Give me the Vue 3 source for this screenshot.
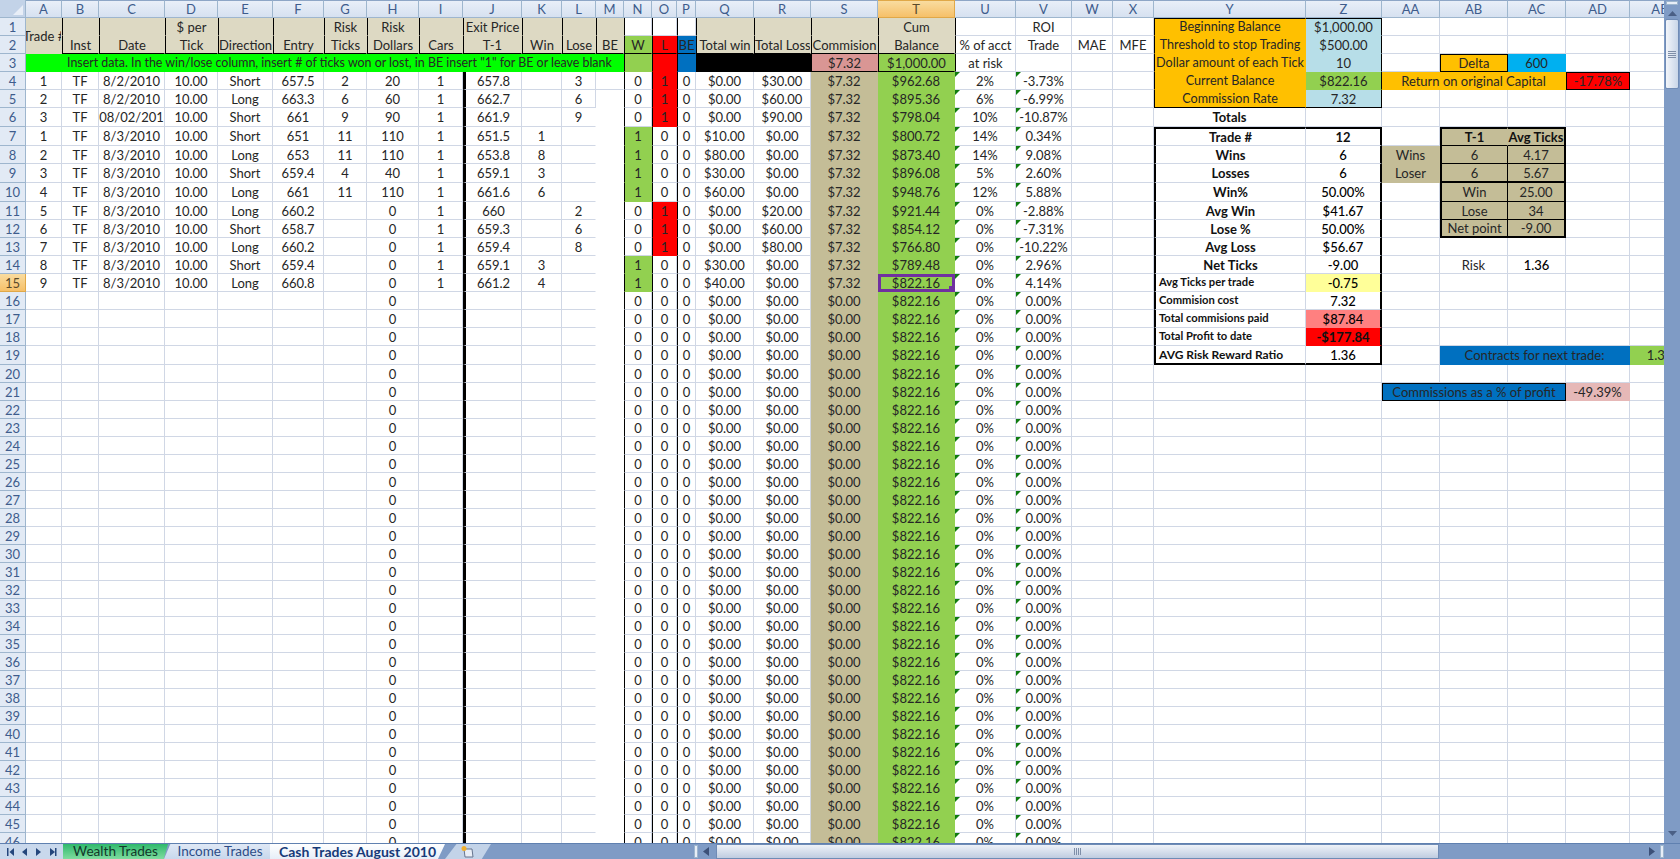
<template>
  <div class="excel">
    <div class="body">
      <div class="sheet">
        <table>
          <colgroup>
            <col :style="{ width: '26px' }" />
            <col v-for="c in columns" :key="c.name" :style="{ width: c.width + 'px' }" />
          </colgroup>
          <thead>
            <tr class="r-18">
              <th class="corner"><span class="corner-mark"></span></th>
              <th v-for="c in columns" :key="c.name" class="col-head" :class="{ picked: c.name === 'T' }">{{ c.name }}</th>
            </tr>
          </thead>
          <tbody>
            <tr v-for="row in rows" :key="row.n" :class="row.height">
              <th class="row-head" :class="{ picked: row.n === 15 }">{{ row.n }}</th>
              <td
                v-for="cell in row.cells"
                :key="cell.col"
                :class="cell.cls"
                :colspan="cell.colspan"
                :rowspan="cell.rowspan"
              >{{ cell.text }}</td>
            </tr>
          </tbody>
        </table>
      </div>
      <div class="vbar">
        <div class="split-v"></div>
        <svg class="arrow-up" width="11" height="7" viewBox="0 0 11 7"><path d="M5.5 1 L10 6 H1 Z" fill="#4a5f85" /></svg>
        <div class="thumb-v">
          <span></span><span></span><span></span><span></span>
        </div>
        <div class="vbar-space"></div>
        <svg class="arrow-down" width="11" height="7" viewBox="0 0 11 7"><path d="M1 1 H10 L5.5 6 Z" fill="#4a5f85" /></svg>
      </div>
    </div>
    <div class="bottom">
      <div class="nav">
        <svg width="62" height="16" viewBox="0 0 62 16">
          <g fill="#25467c">
            <rect x="7" y="4" width="1.5" height="8" />
            <path d="M14 4 V12 L9.5 8 Z" />
            <path d="M27 4 V12 L22 8 Z" />
            <path d="M36 4 V12 L41 8 Z" />
            <path d="M50 4 V12 L55 8 Z" />
            <rect x="55" y="4" width="1.5" height="8" />
          </g>
        </svg>
      </div>
      <div class="tab tab-wealth">Wealth Trades</div>
      <div class="tab tab-income">Income Trades</div>
      <div class="tab tab-cash">Cash Trades August 2010</div>
      <div class="tab tab-new">
        <svg width="16" height="14" viewBox="0 0 16 14">
          <path d="M4 4 H12 L13 12 H5 Z" fill="#e9eef6" stroke="#66758f" />
          <circle cx="4" cy="3.5" r="2.5" fill="#f0b02e" />
        </svg>
      </div>
      <div class="bottom-gap"></div>
      <div class="split-h"></div>
      <svg class="arrow-left" width="8" height="11" viewBox="0 0 8 11"><path d="M7 1 V10 L1 5.5 Z" fill="#3c5078" /></svg>
      <div class="thumb-h"><span></span><span></span><span></span><span></span></div>
      <div class="hbar-space"></div>
      <svg class="arrow-right" width="8" height="11" viewBox="0 0 8 11"><path d="M1 1 V10 L7 5.5 Z" fill="#3c5078" /></svg>
      <div class="split-end"></div>
    </div>
  </div>
</template>

<script setup>
const names = ['A', 'B', 'C', 'D', 'E', 'F', 'G', 'H', 'I', 'J', 'K', 'L', 'M', 'N', 'O', 'P', 'Q', 'R', 'S', 'T', 'U', 'V', 'W', 'X', 'Y', 'Z', 'AA', 'AB', 'AC', 'AD', 'AE']
const widths = [36, 37, 66, 53, 55, 51, 43, 52, 44, 59, 40, 34, 28, 28, 25, 19, 58, 57, 67, 77, 61, 56, 41, 41, 152, 76, 58, 68, 58, 64, 60]
const columns = names.map((name, i) => ({ name, width: widths[i] }))

// date, dollars, direction, entry, risk ticks, risk $, exit, win, lose, w, l, total win, total loss, balance, % risk, roi
const trades = [
  [1, '8/2/2010', 'Short', '657.5', 2, 20, '657.8', '', 3, 0, 1, '$0.00', '$30.00', '$962.68', '2%', '-3.73%'],
  [2, '8/2/2010', 'Long', '663.3', 6, 60, '662.7', '', 6, 0, 1, '$0.00', '$60.00', '$895.36', '6%', '-6.99%'],
  [3, '08/02/201', 'Short', '661', 9, 90, '661.9', '', 9, 0, 1, '$0.00', '$90.00', '$798.04', '10%', '-10.87%'],
  [1, '8/3/2010', 'Short', '651', 11, 110, '651.5', 1, '', 1, 0, '$10.00', '$0.00', '$800.72', '14%', '0.34%'],
  [2, '8/3/2010', 'Long', '653', 11, 110, '653.8', 8, '', 1, 0, '$80.00', '$0.00', '$873.40', '14%', '9.08%'],
  [3, '8/3/2010', 'Short', '659.4', 4, 40, '659.1', 3, '', 1, 0, '$30.00', '$0.00', '$896.08', '5%', '2.60%'],
  [4, '8/3/2010', 'Long', '661', 11, 110, '661.6', 6, '', 1, 0, '$60.00', '$0.00', '$948.76', '12%', '5.88%'],
  [5, '8/3/2010', 'Long', '660.2', '', 0, '660', '', 2, 0, 1, '$0.00', '$20.00', '$921.44', '0%', '-2.88%'],
  [6, '8/3/2010', 'Short', '658.7', '', 0, '659.3', '', 6, 0, 1, '$0.00', '$60.00', '$854.12', '0%', '-7.31%'],
  [7, '8/3/2010', 'Long', '660.2', '', 0, '659.4', '', 8, 0, 1, '$0.00', '$80.00', '$766.80', '0%', '-10.22%'],
  [8, '8/3/2010', 'Short', '659.4', '', 0, '659.1', 3, '', 1, 0, '$30.00', '$0.00', '$789.48', '0%', '2.96%'],
  [9, '8/3/2010', 'Long', '660.8', '', 0, '661.2', 4, '', 1, 0, '$40.00', '$0.00', '$822.16', '0%', '4.14%']
]

// everything right of column X, by row
const side = {
  1: { Y: ['Beginning Balance', 'orange box-top box-l fit'], Z: ['$1,000.00', 'sky box-top box-r'] },
  2: { Y: ['Threshold to stop Trading', 'orange box-l fit'], Z: ['$500.00', 'sky box-r'] },
  3: {
    Y: ['Dollar amount of each Tick', 'orange box-l fit'], Z: ['10', 'sky box-r'],
    AB: ['Delta', 'orange boxed'], AC: ['600', 'cyan']
  },
  4: {
    Y: ['Current Balance', 'orange box-l fit'], Z: ['$822.16', 'green box-r'],
    AA: ['Return on original Capital', 'orange', 3], AD: ['-17.78%', 'red boxed']
  },
  5: { Y: ['Commission Rate', 'orange box-l box-bot fit'], Z: ['7.32', 'sky box-r box-bot'] },
  6: { Y: ['Totals', 'bold'] },
  7: {
    Y: ['Trade #', 'bold thick-top thick-left'], Z: ['12', 'bold thick-top thick-right'],
    AB: ['T-1', 'bold tan thick-top thick-left line-b'], AC: ['Avg Ticks', 'bold tan thick-top thick-right line-b']
  },
  8: {
    Y: ['Wins', 'bold thick-left'], Z: ['6', 'thick-right semi'], AA: ['Wins', 'tan flat'],
    AB: ['6', 'tan thick-left line-b line-r'], AC: ['4.17', 'tan thick-right line-b']
  },
  9: {
    Y: ['Losses', 'bold thick-left'], Z: ['6', 'thick-right semi'], AA: ['Loser', 'tan flat'],
    AB: ['6', 'tan thick-left thick-bot line-r'], AC: ['5.67', 'tan thick-right thick-bot']
  },
  10: {
    Y: ['Win%', 'bold thick-left'], Z: ['50.00%', 'thick-right semi'],
    AB: ['Win', 'tan thick-left line-b line-r'], AC: ['25.00', 'tan thick-right line-b']
  },
  11: {
    Y: ['Avg Win', 'bold thick-left'], Z: ['$41.67', 'thick-right semi'],
    AB: ['Lose', 'tan thick-left line-b line-r'], AC: ['34', 'tan thick-right line-b']
  },
  12: {
    Y: ['Lose %', 'bold thick-left'], Z: ['50.00%', 'thick-right semi'],
    AB: ['Net point', 'tan thick-left thick-bot line-r'], AC: ['-9.00', 'tan thick-right thick-bot']
  },
  13: { Y: ['Avg Loss', 'bold thick-left'], Z: ['$56.67', 'thick-right semi'] },
  14: {
    Y: ['Net Ticks', 'bold thick-left'], Z: ['-9.00', 'thick-right semi'],
    AB: ['Risk', ''], AC: ['1.36', 'semi']
  },
  15: { Y: ['Avg Ticks per trade', 'bold thick-left small-left'], Z: ['-0.75', 'yellow thick-right semi'] },
  16: { Y: ['Commision cost', 'bold thick-left small-left'], Z: ['7.32', 'thick-right semi'] },
  17: { Y: ['Total commisions paid', 'bold thick-left small-left'], Z: ['$87.84', 'salmon thick-right semi'] },
  18: { Y: ['Total Profit to date', 'bold thick-left small-left'], Z: ['-$177.84', 'red thick-right bold'] },
  19: {
    Y: ['AVG Risk Reward Ratio', 'bold thick-left thick-bot left-text'], Z: ['1.36', 'thick-right thick-bot semi'],
    AB: ['Contracts for next trade:', 'blue', 3], AE: ['1.36', 'green']
  },
  21: { AA: ['Commissions as a % of profit', 'blue boxed', 3], AD: ['-49.39%', 'pink'] }
}

const makeTradeCells = (n) => {
  const c = {}
  const t = trades[n - 4]
  if (t) {
    c.A = [t[0]]
    c.B = ['TF']
    c.C = [t[1]]
    c.D = ['10.00']
    c.E = [t[2]]
    c.F = [t[3]]
    c.G = [t[4]]
    c.H = [t[5]]
    c.I = [1]
    c.J = [t[6]]
    c.K = [t[7]]
    c.L = [t[8]]
    c.N = [t[9], t[9] ? 'green' : '']
    c.O = [t[10], t[10] ? 'red' : '']
    c.P = [0]
    c.Q = [t[11]]
    c.R = [t[12]]
    c.S = ['$7.32', 'khaki']
    c.T = [t[13], n === 15 ? 'green selected' : 'green']
    c.U = [t[14], 'flagged']
    c.V = [t[15], 'flagged']
  } else {
    c.H = [0]
    c.N = [0]
    c.O = [0]
    c.P = [0]
    c.Q = ['$0.00']
    c.R = ['$0.00']
    c.S = ['$0.00', 'khaki']
    c.T = ['$822.16', 'green']
    c.U = ['0%', 'flagged']
    c.V = ['0.00%', 'flagged']
  }
  return c
}

const headCells = {
  1: {
    A: ['Trade #', 'head clip', 1, 2], B: ['', 'head'], C: ['', 'head'], D: ['$ per', 'head'], E: ['', 'head'], F: ['', 'head'],
    G: ['Risk', 'head'], H: ['Risk', 'head'], I: ['', 'head'], J: ['Exit Price', 'head'], K: ['', 'head'], L: ['', 'head'], M: ['', 'head'],
    N: [''], O: [''], P: [''], Q: ['', 'head'], R: ['', 'head'], S: ['', 'head'], T: ['Cum', 'head'], U: [''], V: ['ROI']
  },
  2: {
    B: ['Inst', 'head'], C: ['Date', 'head'], D: ['Tick', 'head'], E: ['Direction', 'head'], F: ['Entry', 'head'],
    G: ['Ticks', 'head'], H: ['Dollars', 'head'], I: ['Cars', 'head'], J: ['T-1', 'head'], K: ['Win', 'head'], L: ['Lose', 'head'], M: ['BE', 'head'],
    N: ['W', 'green'], O: ['L', 'red'], P: ['BE', 'blue'], Q: ['Total win', 'head'], R: ['Total Loss', 'head'], S: ['Commision', 'head'],
    T: ['Balance', 'head'], U: ['% of acct'], V: ['Trade'], W: ['MAE'], X: ['MFE']
  },
  3: {
    A: ['Insert data. In the win/lose column, insert # of ticks won or lost, in BE insert "1" for BE or leave blank', 'lime', 13],
    N: ['', 'green'], O: ['', 'red'], P: ['', 'blue'], Q: ['', 'black'], R: ['', 'black'],
    S: ['$7.32', 'rose'], T: ['$1,000.00', 'green'], U: ['at risk']
  }
}

// black rules that run down the columns on the left part of the sheet
const edgeClass = (name, n) => {
  const out = []
  if (name === 'J' && n !== 3) out.push('rule-thick')
  if (name === 'N' || name === 'O' || name === 'P') out.push('rule-left')
  if (n <= 3 && (name === 'S' || name === 'T' || name === 'U')) out.push('rule-left')
  if (n <= 2 && names.indexOf(name) >= 1 && names.indexOf(name) <= 19) out.push('rule-left')
  if (n === 2 && names.indexOf(name) <= 19) out.push('rule-bottom')
  if (n === 3 && (name === 'S' || name === 'T')) out.push('rule-bottom')
  if (name === 'M' && n > 4) out.push('no-grid')
  if (name === 'L' && n > 5) out.push('no-right')
  if (name === 'M' && n === 4) out.push('no-right')
  return out.join(' ')
}

const tallRows = [6, 9, 10, 19]

const rows = []
for (let n = 1; n <= 46; n++) {
  const data = { ...(n <= 3 ? headCells[n] : makeTradeCells(n)), ...(side[n] || {}) }
  const cells = []
  for (let i = 0; i < names.length; i++) {
    const name = names[i]
    if (n === 2 && name === 'A') continue
    const d = data[name] || ['']
    const colspan = d[2] || 1
    cells.push({
      col: name,
      text: d[0],
      cls: [d[1] || '', edgeClass(name, n)].join(' '),
      colspan,
      rowspan: d[3] || 1
    })
    i += colspan - 1
  }
  rows.push({ n, cells, height: tallRows.includes(n) ? 'r-19' : n === 1 ? 'r-17' : 'r-18' })
}
</script>

<style>
html,
body {
  margin: 0;
  overflow: hidden;
  background: #fff;
}
</style>

<style scoped>
.excel {
  width: 1680px;
  height: 859px;
  display: flex;
  flex-direction: column;
  overflow: hidden;
  font-family: Lato, "Liberation Sans", sans-serif;
  font-size: 13px;
  color: #262626;
}

.body {
  flex: 1;
  min-height: 0;
  display: flex;
}

.sheet {
  width: 1664px;
  overflow: hidden;
}

table {
  table-layout: fixed;
  border-collapse: separate;
  border-spacing: 0;
  width: 1668px;
}

.r-17 { height: 17px; }
.r-18 { height: 18px; }
.r-19 { height: 19px; }

th {
  font-weight: 400;
  padding: 0;
  color: #3e5c8c;
  box-sizing: border-box;
}

.col-head {
  background: linear-gradient(#e9eff8, #d6e1f0);
  border-right: 1px solid #9eb6ce;
  border-bottom: 1px solid #9eb6ce;
  border-top: 1px solid #8ea6c6;
}

.row-head {
  background: #e2eaf5;
  border-right: 1px solid #9eb6ce;
  border-bottom: 1px solid #9eb6ce;
}

.picked {
  background: linear-gradient(#f9dca0, #f6c069);
  border-color: #e0a848;
  color: #5a4a2a;
}

.corner {
  position: relative;
  background: #c3d3e8;
  border-right: 1px solid #9eb6ce;
  border-bottom: 1px solid #9eb6ce;
}

.corner-mark {
  position: absolute;
  right: 2px;
  bottom: 2px;
  width: 0;
  height: 0;
  border-left: 10px solid transparent;
  border-bottom: 10px solid #e8eef7;
}

td {
  padding: 0;
  box-sizing: border-box;
  text-align: center;
  white-space: nowrap;
  overflow: hidden;
  line-height: 16px;
  border-right: 1px solid #d0d7e5;
  border-bottom: 1px solid #d0d7e5;
  background: #fff;
}

.head { background: #ddd9c3; border-color: #ddd9c3; }
.clip { text-align: left; text-indent: -3px; }
.lime { background: #00ff00; border-color: #00ff00; padding-left: 41px; text-align: left; font-size: 12.4px; }
.green { background: #92d050; border-color: #92d050; }
.red { background: #ff0000; border-color: #ff0000; }
.blue { background: #0070c0; border-color: #0070c0; }
.black { background: #000; border-color: #000; }
.rose { background: #d99694; border-color: #d99694; }
.khaki { background: #c4bd97; border-color: #c4bd97; }
.orange { background: #ffc000; border-color: #ffc000; }
.sky { background: #b7dee8; border-color: #b7dee8; }
.cyan { background: #00b0f0; border-color: #00b0f0; }
.tan { background: #c4bd97; border-color: #c4bd97; }
.flat { border-color: #c4bd97; }
.yellow { background: #ffff99; border-color: #ffff99; }
.salmon { background: #ff8080; border-color: #ff8080; }
.pink { background: #e6b8b7; border-color: #e6b8b7; }

.fit { font-size: 12.6px; }
.bold { font-weight: 700; color: #111; }
.semi { font-weight: 500; color: #000; }
.small-left { text-align: left; padding-left: 3px; font-size: 11.2px; vertical-align: top; }
.left-text { text-align: left; padding-left: 3px; font-size: 12px; }

.box-top { border-top: 1px solid #000; }
.box-l { border-left: 1px solid #000; }
.box-r { border-right: 1px solid #000; }
.box-bot { border-bottom: 1px solid #000; }
.boxed { border: 1px solid #000; }

.thick-top { border-top: 2px solid #000; }
.thick-left { border-left: 2px solid #000; }
.thick-right { border-right: 2px solid #000; }
.thick-bot { border-bottom: 2px solid #000; }
.line-b { border-bottom: 1px solid #000; }
.line-r { border-right: 1px solid #000; }

.rule-thick { border-left: 3px solid #000; }
.rule-left { border-left: 1px solid #000; }
.rule-bottom { border-bottom: 1px solid #000; }
.no-grid { border-color: transparent; }
.no-right { border-right-color: transparent; }

.flagged { position: relative; }
.flagged::before {
  content: "";
  position: absolute;
  left: 0;
  top: 0;
  border-top: 5px solid #107c10;
  border-right: 5px solid transparent;
}

.selected {
  position: relative;
  outline: 3px solid #7030a0;
  outline-offset: -3px;
}

.selected::after {
  content: "";
  position: absolute;
  right: 0;
  bottom: 0;
  width: 5px;
  height: 5px;
  background: #7030a0;
}

.vbar {
  width: 16px;
  background: #7f9bc5;
  display: flex;
  flex-direction: column;
  align-items: center;
}

.split-v {
  width: 12px;
  height: 4px;
  margin-top: 1px;
  background: #e8eef7;
  border: 1px solid #9eb6ce;
  box-sizing: border-box;
}

.arrow-up { margin-top: 5px; }

.thumb-v {
  width: 14px;
  height: 70px;
  margin-top: 2px;
  background: linear-gradient(90deg, #f2f5fa, #c9d6e8);
  border: 1px solid #6f8bb5;
  border-radius: 2px;
  box-sizing: border-box;
  display: flex;
  flex-direction: column;
  align-items: center;
  justify-content: center;
  gap: 1px;
}

.thumb-v span {
  width: 8px;
  height: 1px;
  background: #7e8ea8;
}

.vbar-space { flex: 1; }
.arrow-down { margin-bottom: 6px; }

.bottom {
  height: 16px;
  display: flex;
  align-items: center;
  background: #7f9bc5;
  border-top: 1px solid #5f80b0;
  box-sizing: border-box;
}

.nav {
  width: 63px;
  height: 100%;
  background: #c9d8ec;
  flex: none;
}

.tab {
  height: 100%;
  flex: none;
  display: flex;
  align-items: center;
  justify-content: center;
  line-height: 15px;
  box-sizing: border-box;
}

.tab-wealth {
  width: 105px;
  font-size: 13.6px;
  background: linear-gradient(#2fb96c, #7fdc9f);
  clip-path: polygon(0 0, 100% 0, 96% 100%, 0 100%);
  color: #12382a;
}

.tab-income {
  width: 106px;
  margin-left: -4px;
  padding-left: 6px;
  font-size: 13.5px;
  background: linear-gradient(#dfe8f5, #c8d8ec);
  clip-path: polygon(6% 0, 100% 0, 100% 100%, 0 100%);
  color: #2c4c86;
}

.tab-cash {
  width: 175px;
  font-size: 14px;
  background: linear-gradient(#fff, #e6eef8);
  clip-path: polygon(0 0, 100% 0, 96% 100%, 0 100%);
  color: #173a78;
  font-weight: 700;
}

.tab-new {
  width: 46px;
  background: #c3d3e8;
  clip-path: polygon(25% 0, 100% 0, 80% 100%, 0 100%);
}

.bottom-gap { flex: 1; }

.split-h {
  width: 4px;
  height: 13px;
  background: #e8eef7;
  border: 1px solid #9eb6ce;
  box-sizing: border-box;
  margin-right: 4px;
}

.arrow-left { margin-right: 6px; }

.thumb-h {
  width: 723px;
  height: 100%;
  flex: none;
  background: linear-gradient(#eef2f8, #bfcce0);
  border: 1px solid #6f8bb5;
  box-sizing: border-box;
  display: flex;
  align-items: center;
  justify-content: center;
  gap: 1px;
}

.thumb-h span {
  width: 1px;
  height: 7px;
  background: #7e8ea8;
}

.hbar-space { width: 209px; }
.arrow-right { margin-right: 4px; }

.split-end {
  width: 4px;
  height: 13px;
  background: #e8eef7;
  border: 1px solid #9eb6ce;
  box-sizing: border-box;
  margin-right: 16px;
}
</style>
